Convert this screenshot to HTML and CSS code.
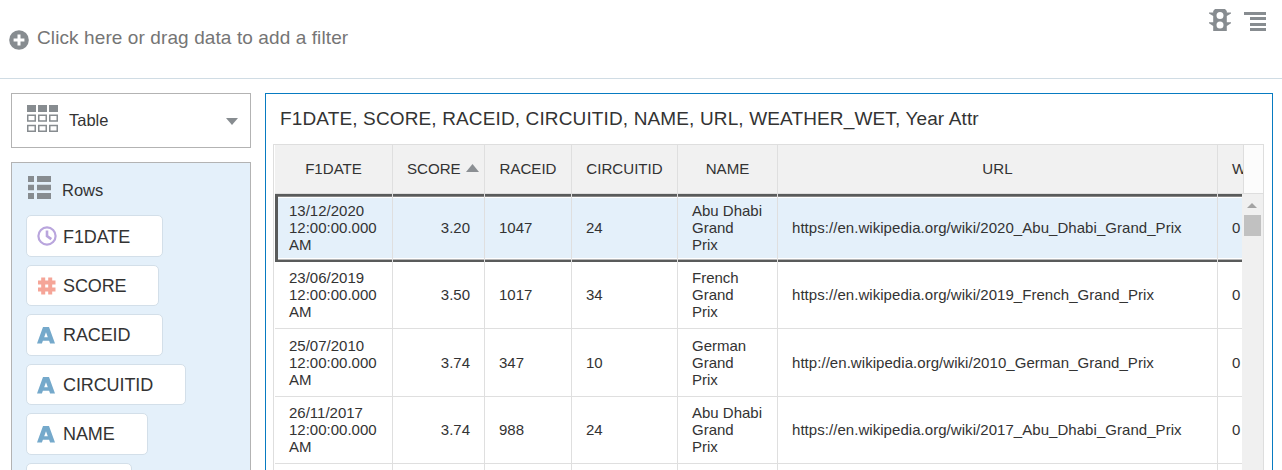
FILE: index.html
```html
<!DOCTYPE html>
<html lang="en">
<head>
<meta charset="utf-8">
<title>Data table</title>
<link rel="stylesheet" href="styles.css">
</head>
<body>
<svg class="defs" width="0" height="0">
  <symbol id="letter" viewBox="0 0 18 18"><path fill="#75a9cb" fill-rule="evenodd" d="M6 1h6l6 16.5h-4.9l-1-2.8H5.9l-1 2.8H0zM9 6.2 7.2 11.2h3.6z"/></symbol>
</svg>
<header class="filter-bar">
  <div class="add-filter">
    <svg class="plus" width="20" height="20" viewBox="0 0 20 20"><circle cx="10" cy="10" r="9.8" fill="#878c90"/><path d="M10 4.6v10.8M4.6 10h10.8" stroke="#fff" stroke-width="3"/></svg>
    <span>Click here or drag data to add a filter</span>
  </div>
  <div class="tools">
    <svg width="22" height="22" viewBox="0 0 22 22"><path fill="#878c90" fill-rule="evenodd" d="M6 0h10L17.8 2v1.5H22v1L17.8 7v6.3H22v1L17.8 17v5H4.2v-5L0 14.3v-1h4.2V7L0 4.5v-1h4.2V2zM11 3.1a3.5 3.5 0 1 0 0 7 3.5 3.5 0 0 0 0-7zm0 9.5a3.5 3.5 0 1 0 0 7 3.5 3.5 0 0 0 0-7z"/></svg>
    <svg class="list-icon" width="22" height="22" viewBox="0 0 22 22"><path fill="#878c90" d="M0 3h22v3H0zm6 5h16v3H6zm0 6h16v3H6zm0 5h16v3H6z"/></svg>
  </div>
</header>
<main class="workspace">
  <aside class="grammar">
    <div class="viz-type">
      <svg width="31" height="27" viewBox="0 0 31 27"><g fill="#878c90"><path d="M0 0h9v7H0zm11 0h9v7h-9zm11 0h9v7h-9z"/></g><path fill="none" stroke="#878c90" stroke-width="1.5" d="M.75 10.25h7.5v5.7H.75zm11 0h7.5v5.7h-7.5zm11 0h7.5v5.7h-7.5zm-22 10.2h7.5v5.7H.75zm11 0h7.5v5.7h-7.5zm11 0h7.5v5.7h-7.5z"/></svg>
      <span class="viz-name">Table</span>
      <svg class="caret" width="12" height="7" viewBox="0 0 12 7"><path fill="#878c90" d="M0 0h12L6 7z"/></svg>
    </div>
    <section class="rows-panel">
      <h2 class="rows-title">
        <svg width="23" height="23" viewBox="0 0 23 23"><path fill="#878c90" d="M0 0h6v6H0zm9 0h14v6H9zM0 8.7h6v5.6H0zm9 0h14v5.6H9zM0 17h6v6H0zm9 0h14v6H9z"/></svg>
        <span>Rows</span>
      </h2>
      <div class="chips">
        <div class="chip chip-date"><svg width="20" height="20" viewBox="0 0 20 20"><circle cx="10" cy="10" r="8.6" fill="none" stroke="#b9a5dd" stroke-width="2.2"/><path d="M10 4.5v5.6l4.3 3" fill="none" stroke="#b9a5dd" stroke-width="2.6"/></svg><span>F1DATE</span></div>
        <div class="chip chip-score"><svg width="20" height="20" viewBox="0 0 20 20"><path d="M6.2 1.5v17M13.2 1.5v17M1 6.5h17.5M1 13.5h17.5" stroke="#f5a598" stroke-width="4"/></svg><span>SCORE</span></div>
        <div class="chip chip-race"><svg width="18" height="18"><use href="#letter"/></svg><span>RACEID</span></div>
        <div class="chip chip-circuit"><svg width="18" height="18"><use href="#letter"/></svg><span>CIRCUITID</span></div>
        <div class="chip chip-name"><svg width="18" height="18"><use href="#letter"/></svg><span>NAME</span></div>
        <div class="chip chip-url"></div>
      </div>
    </section>
  </aside>
  <section class="canvas">
    <h1 class="title">F1DATE, SCORE, RACEID, CIRCUITID, NAME, URL, WEATHER_WET, Year Attr</h1>
    <div class="table">
      <div class="head-line">
        <div class="row head">
          <div>F1DATE</div>
          <div class="sorted">SCORE<svg width="13" height="8" viewBox="0 0 13 8"><path fill="#8b8f93" d="M0 8h13L6.5 0z"/></svg></div>
          <div>RACEID</div><div>CIRCUITID</div><div>NAME</div><div>URL</div><div class="clipped">W</div>
        </div>
      </div>
      <div class="body-line">
        <div class="body">
          <div class="row selected"><div>13/12/2020 12:00:00.000 AM</div><div>3.20</div><div>1047</div><div>24</div><div>Abu Dhabi Grand Prix</div><div>https://en.wikipedia.org/wiki/2020_Abu_Dhabi_Grand_Prix</div><div>0</div></div>
          <div class="row"><div>23/06/2019 12:00:00.000 AM</div><div>3.50</div><div>1017</div><div>34</div><div>French Grand Prix</div><div>https://en.wikipedia.org/wiki/2019_French_Grand_Prix</div><div>0</div></div>
          <div class="row tall"><div>25/07/2010 12:00:00.000 AM</div><div>3.74</div><div>347</div><div>10</div><div>German Grand Prix</div><div>http://en.wikipedia.org/wiki/2010_German_Grand_Prix</div><div>0</div></div>
          <div class="row"><div>26/11/2017 12:00:00.000 AM</div><div>3.74</div><div>988</div><div>24</div><div>Abu Dhabi Grand Prix</div><div>https://en.wikipedia.org/wiki/2017_Abu_Dhabi_Grand_Prix</div><div>0</div></div>
          <div class="row"><div></div><div></div><div></div><div></div><div></div><div></div><div></div></div>
        </div>
        <div class="scrollbar">
          <svg width="10" height="5" viewBox="0 0 10 5"><path fill="#a3a3a3" d="M0 5h10L5 0z"/></svg>
          <div class="thumb"></div>
        </div>
      </div>
    </div>
  </section>
</main>
</body>
</html>
```
FILE: styles.css
```css
* { box-sizing: border-box; }
html, body { height: 100%; }
body {
  margin: 0;
  height: 470px;
  overflow: hidden;
  background: #fff;
  color: #333;
  font-family: "Liberation Sans", Arial, sans-serif;
  font-size: 15px;
}
h1, h2 { margin: 0; font-weight: normal; }
svg { display: block; flex: none; }
.defs { display: none; }

.filter-bar {
  display: flex;
  justify-content: space-between;
  height: 79px;
  border-bottom: 1px solid #d0dce4;
}
.add-filter {
  display: flex;
  align-items: flex-start;
  gap: 8px;
  padding: 26px 0 0 9px;
  color: #757575;
  font-size: 19px;
  letter-spacing: 0.1px;
  line-height: 23px;
  white-space: nowrap;
}
.plus { margin-top: 4px; }
.tools { display: flex; gap: 13px; padding: 9px 16px 0 0; }

.workspace {
  display: flex;
  gap: 14px;
  height: 391px;
  padding: 14px 9px 0 11px;
  overflow: hidden;
}
.grammar {
  display: flex;
  flex-direction: column;
  gap: 14px;
  flex: none;
  width: 240px;
  font-size: 16.5px;
}
.viz-type {
  display: flex;
  align-items: flex-start;
  flex: none;
  height: 55px;
  padding: 11px 12px 0 15px;
  border: 1px solid #b3b3b3;
}
.viz-name { margin: 5px 0 0 11px; line-height: 20px; }
.caret { margin: 13px 0 0 auto; }
.rows-panel {
  flex: none;
  height: 340px;
  padding: 13px 14px 0;
  border: 1px solid #b3b3b3;
  background: #e4f0fa;
}
.rows-title {
  display: flex;
  gap: 11px;
  height: 39.3px;
  padding-left: 2px;
  font-size: 16.5px;
  line-height: 29px;
}
.chips {
  display: flex;
  flex-direction: column;
  align-items: flex-start;
  gap: 8px;
}
.chip {
  display: flex;
  align-items: center;
  height: 41.5px;
  padding-left: 10px;
  border: 1px solid #d3dfe9;
  border-radius: 5px;
  background: #fff;
  font-size: 18px;
  letter-spacing: -0.1px;
}
.chip span { padding-top: 1px; white-space: nowrap; }
.chip-date span { padding-top: 2px; }
.chip svg { margin-right: 6px; }
.chip-race svg, .chip-circuit svg, .chip-name svg { margin-right: 8px; }
.chip-date, .chip-race { width: 137px; }
.chip-score { width: 133px; }
.chip-circuit { width: 160px; }
.chip-name { width: 122px; }
.chip-url { width: 106px; }

.canvas {
  flex: 1;
  min-width: 0;
  height: 420px;
  padding: 0 8px 0 7px;
  border: 1px solid #087bc1;
}
.title {
  height: 50px;
  padding-left: 7px;
  font-size: 19px;
  letter-spacing: 0.135px;
  line-height: 49px;
  white-space: nowrap;
}
.table {
  height: 370px;
  border: 1px solid #dedede;
  padding-left: 1px;
}
.row {
  display: grid;
  grid-template-columns: 118px 92px 87px 106px 100px 440px 130px;
  height: 67px;
}
.tall { height: 68px; }
.row > div {
  display: flex;
  align-items: center;
  padding: 0 14px 1px;
  border-right: 1px solid #dfdfdf;
  border-bottom: 1px solid #dfdfdf;
  line-height: 17px;
}
.row > div:nth-child(2) { justify-content: flex-end; }
.row > div:nth-child(6) { letter-spacing: 0.05px; }
.head-line {
  height: 49px;
  background: #fcfcfc;
  border-bottom: 1px solid #dedede;
}
.row.head {
  width: 969px;
  height: 48px;
  overflow: hidden;
  border-right: 1px solid #dedede;
  background: #f1f1f1;
  font-size: 15.1px;
}
.row.head > div { justify-content: center; padding-bottom: 1px; border-bottom: 0; }
.row.head > div.sorted { justify-content: flex-start; gap: 5px; padding-right: 0; }
.sorted svg { margin-top: -1px; }
.row.head > div.clipped { justify-content: flex-start; }
.body-line { display: flex; }
.body { width: 967px; height: 325px; overflow: hidden; }
.row.selected { height: 68px; }
.row.selected > div {
  padding-bottom: 2px;
  border-bottom: 0;
  background: linear-gradient(#595b5b 0 2px, #858585 2px 3px, #fff 3px 4px, #e4f0fa 4px 64px, #fff 64px 65px, #b5b5b5 65px 66px, #595b5b 66px);
}
.row.selected > div:first-child {
  padding-left: 11px;
  border-left: 3px solid #595b5b;
}
.scrollbar {
  width: 21px;
  height: 325px;
  padding: 9px 0 0 2px;
  background: #f0f0f0;
}
.scrollbar svg { margin-left: 3px; }
.thumb { width: 17px; height: 21px; margin-top: 7px; background: #c1c1c1; }
```
